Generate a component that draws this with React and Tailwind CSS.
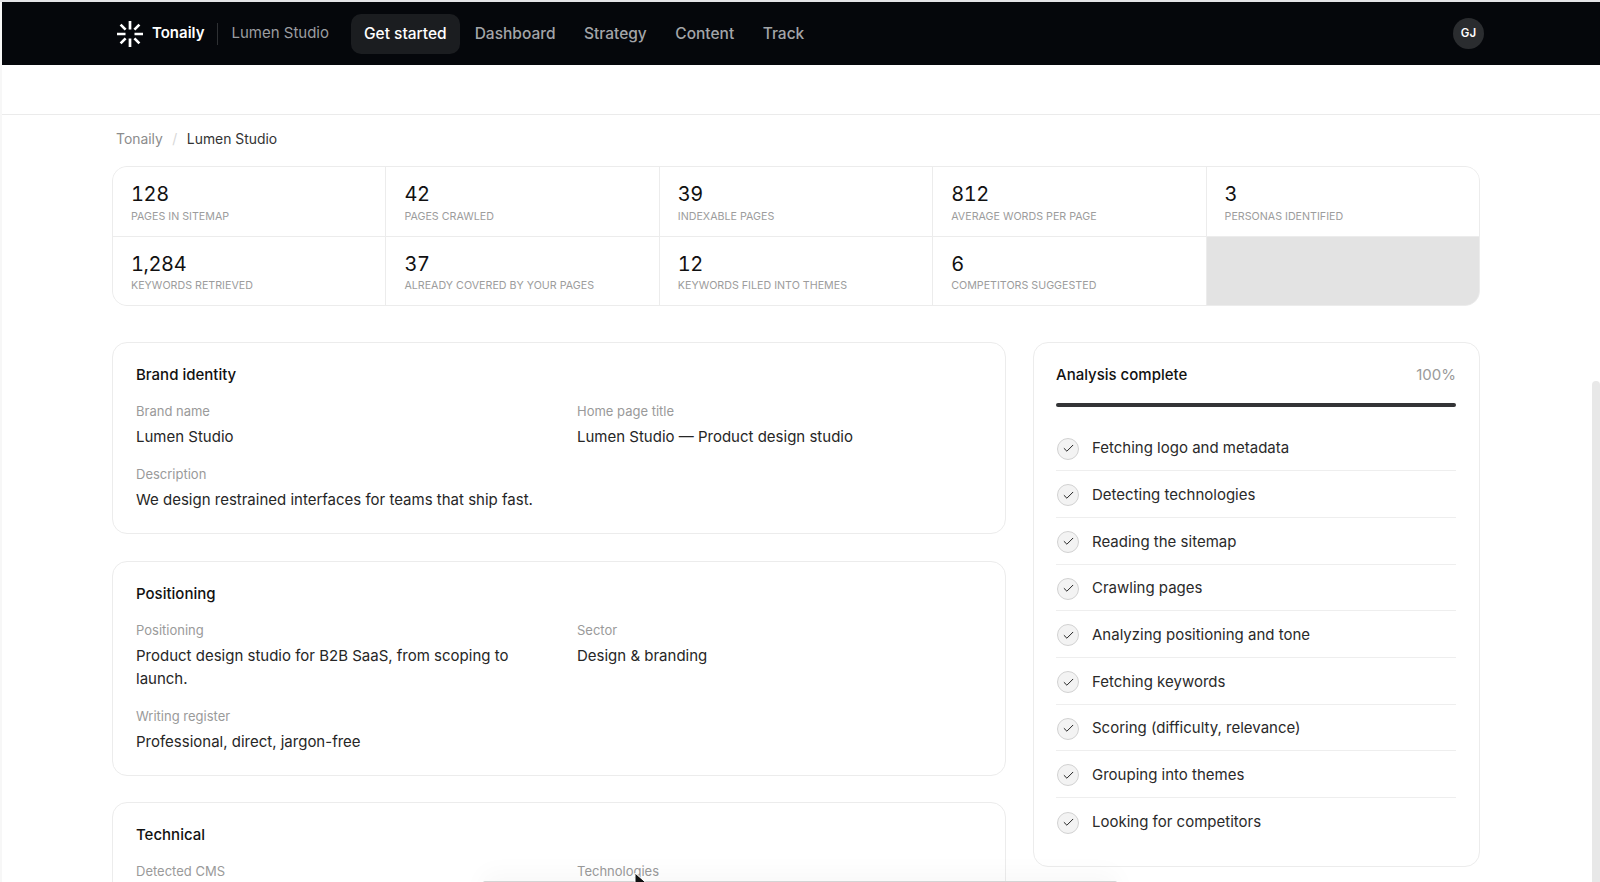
import { Check } from 'lucide-react';

const stats = [
  ['128', 'Pages in sitemap'],
  ['42', 'Pages crawled'],
  ['39', 'Indexable pages'],
  ['812', 'Average words per page'],
  ['3', 'Personas identified'],
  ['1,284', 'Keywords retrieved'],
  ['37', 'Already covered by your pages'],
  ['12', 'Keywords filed into themes'],
  ['6', 'Competitors suggested'],
];

const steps = [
  'Fetching logo and metadata',
  'Detecting technologies',
  'Reading the sitemap',
  'Crawling pages',
  'Analyzing positioning and tone',
  'Fetching keywords',
  'Scoring (difficulty, relevance)',
  'Grouping into themes',
  'Looking for competitors',
];

function Logo() {
  return (
    <svg width="28" height="28" viewBox="0 0 28 28" className="shrink-0">
      <g stroke="#fff" strokeWidth="2.7" strokeLinecap="butt">
        <path d="M14 1v8.5M14 18.5V27M1 14h8.5M18.5 14H27" />
        <path d="M4.6 4.6l5 5M18.4 18.4l5 5M23.4 4.6l-5 5M9.6 18.4l-5 5" />
      </g>
    </svg>
  );
}

function Header() {
  return (
    <header className="ml-[2px] flex h-[63px] items-center justify-between bg-[#05070b] pl-[114px] pr-[116px]">
      <div className="flex items-center">
        <Logo />
        <span className="ml-[8px] text-[15px] font-semibold text-white">Tonaily</span>
        <div className="ml-[13px] h-[22px] w-px bg-[#2e3033]" />
        <span className="ml-[13px] text-[15px] text-[#9b9da0]">Lumen Studio</span>
        <nav className="ml-[22px] flex items-center text-[15.5px] font-medium text-[#a3a5a8]">
          <a className="flex h-[40px] items-center rounded-[10px] bg-[#1b1d20] px-[13px] text-white">Get started</a>
          <a className="ml-[15px]">Dashboard</a>
          <a className="ml-[28.5px]">Strategy</a>
          <a className="ml-[28.5px]">Content</a>
          <a className="ml-[28.5px]">Track</a>
        </nav>
      </div>
      <div className="flex h-[31px] w-[31px] items-center justify-center rounded-full bg-[#2a2c2f] text-[11.5px] font-semibold text-white">
        GJ
      </div>
    </header>
  );
}

function Stat({ value, label }) {
  return (
    <div className="h-[68.5px] bg-white pl-[18px] pt-[14px]">
      <div className="text-[20px] leading-[26px] tracking-[-0.02em] text-[#111] tabular-nums">{value}</div>
      <div className="mt-[1.5px] text-[10.7px] uppercase leading-[15px] text-[#9c9c9c]">{label}</div>
    </div>
  );
}

function Field({ label, children, className = '' }) {
  return (
    <div className={className}>
      <div className="text-[13px] leading-[18px] text-[#9a9a9a]">{label}</div>
      {children && <div className="mt-[5px] text-[15px] leading-[23px] text-[#262626]">{children}</div>}
    </div>
  );
}

function Card({ title, children }) {
  return (
    <section className="rounded-[15px] border border-[#ececec] pb-[22px] pl-[23px] pr-[22px] pt-[21px]">
      <h2 className="text-[15px] font-[450] leading-[22px] text-[#111]">{title}</h2>
      <div className="mt-[16px] grid grid-cols-2 gap-x-[35px] gap-y-[17px]">{children}</div>
    </section>
  );
}

function Progress() {
  return (
    <aside className="h-[525px] rounded-[15px] border border-[#ececec] pl-[22px] pr-[23px] pt-[21px]">
      <div className="flex items-center justify-between leading-[22px]">
        <span className="text-[15px] font-[450] text-[#111]">Analysis complete</span>
        <span className="text-[15px] text-[#9a9a9a]">100%</span>
      </div>
      <div className="mt-[17px] h-[4px] rounded-full bg-[#333436]" />
      <ul className="mt-[17.5px]">
        {steps.map((step, i) => (
          <li
            key={step}
            className={`flex h-[46.7px] items-center pt-[2.5px] ${i < steps.length - 1 ? 'border-b border-[#eeeeee]' : ''}`}
          >
            <span className="ml-px flex h-[22px] w-[22px] items-center justify-center rounded-full border border-[#d2d2d2] bg-[#f3f3f3]">
              <Check size={13} strokeWidth={1.7} className="text-[#111]" />
            </span>
            <span className="ml-[13px] text-[15px] text-[#2a2a2a]">{step}</span>
          </li>
        ))}
      </ul>
    </aside>
  );
}

export default function App() {
  return (
    <div className="relative h-[882px] overflow-hidden bg-[#f7f7f7] font-['Inter',sans-serif]">
      <div className="h-[2px] bg-[#e3e4e6]" />
      <Header />
      <div className="ml-[2px] bg-white">
        <div className="h-[50px] border-b border-[#ebebeb]" />
        <main className="ml-[110px] w-[1368px] pb-[40px]">
          <div className="flex h-[48px] items-center pl-[4px] text-[13.9px]">
            <span className="text-[#8c8c8c]">Tonaily</span>
            <span className="mx-[9.5px] text-[#d8d8d8]">/</span>
            <span className="text-[#333]">Lumen Studio</span>
          </div>
          <div className="mt-[3px] grid grid-cols-5 gap-px overflow-hidden rounded-[15px] border border-[#ececec] bg-[#ececec]">
            {stats.map(([value, label]) => (
              <Stat key={label} value={value} label={label} />
            ))}
            <div className="bg-[#e3e3e3]" />
          </div>
          <div className="mt-[36px] flex items-start gap-[27px]">
            <div className="flex w-[894px] shrink-0 flex-col gap-[26.5px]">
              <Card title="Brand identity">
                <Field label="Brand name">Lumen Studio</Field>
                <Field label="Home page title">Lumen Studio — Product design studio</Field>
                <Field label="Description" className="col-span-2">
                  We design restrained interfaces for teams that ship fast.
                </Field>
              </Card>
              <Card title="Positioning">
                <Field label="Positioning">Product design studio for B2B SaaS, from scoping to launch.</Field>
                <Field label="Sector">Design &amp; branding</Field>
                <Field label="Writing register" className="col-span-2">
                  Professional, direct, jargon-free
                </Field>
              </Card>
              <Card title="Technical">
                <Field label="Detected CMS" />
                <Field label="Technologies" />
              </Card>
            </div>
            <div className="flex-1">
              <Progress />
            </div>
          </div>
        </main>
      </div>
      {/* bottom sheet peeking in, scrollbar and mouse pointer sit over the page */}
      <div className="absolute left-[483px] top-[881px] h-[40px] w-[634px] rounded-t-[2px] border-t border-[#d4d4d4] bg-white shadow-[0_-8px_24px_rgba(0,0,0,0.03)]" />
      <div className="absolute bottom-0 right-0 top-[381px] w-[8px] rounded-t-full bg-[#e8e8e8]" />
      <svg width="16" height="20" viewBox="0 0 16 20" className="absolute left-[634px] top-[872px]">
        <path d="M1 1l0 15 4-3.5 3 6 2.5-1.2-3-5.8 5.5 0z" fill="#111" stroke="#fff" strokeWidth="1" />
      </svg>
    </div>
  );
}
